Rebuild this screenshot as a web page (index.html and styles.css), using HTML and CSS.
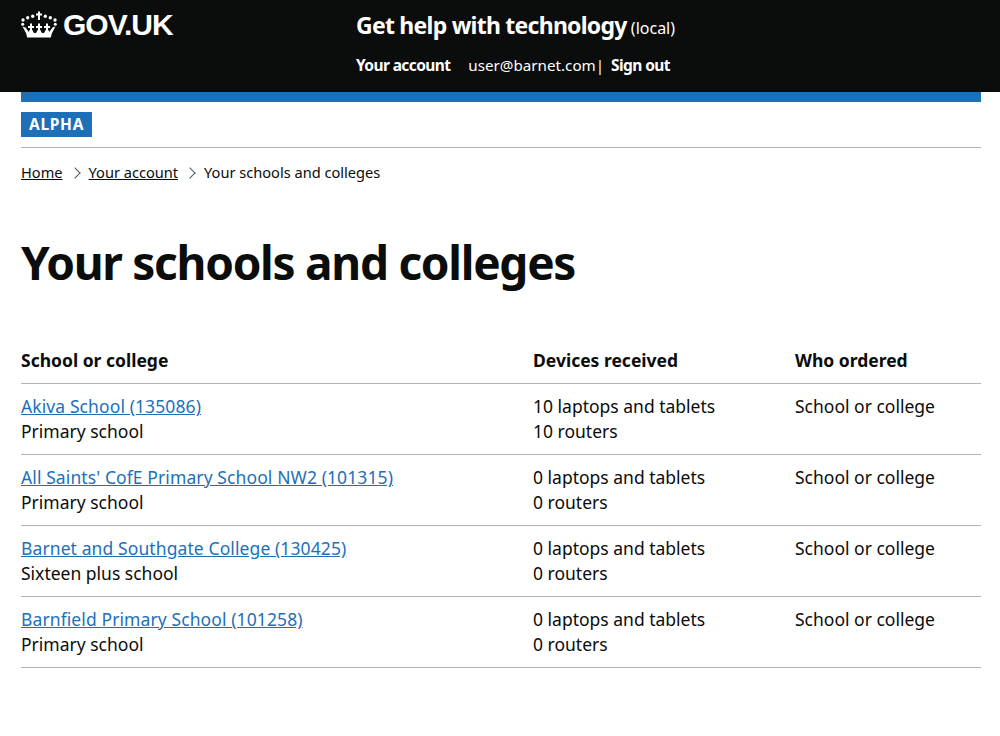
FILE: index.html
```html
<!DOCTYPE html>
<html lang="en">
<head>
  <meta charset="UTF-8">
  <title>Your schools and colleges - Get help with technology</title>
  <link rel="stylesheet" href="styles.css">
</head>
<body>
  <header class="header">
    <div class="header-logo">
      <svg class="crown" viewBox="0 0 36 27" width="36" height="27" fill="#fff">
        <path d="M17 .5h2v2h2v2h-2V9h-2V4.500h-2v-2h2z"/>
        <circle cx="11.700" cy="5.200" r="1.700"/><circle cx="24.300" cy="5.200" r="1.700"/>
        <circle cx="6.700" cy="6.700" r="1.700"/><circle cx="29.300" cy="6.700" r="1.700"/>
        <circle cx="2" cy="9" r="1.700"/><circle cx="34" cy="9" r="1.700"/>
        <circle cx="1.700" cy="13.300" r="1.500"/><circle cx="34.300" cy="13.300" r="1.500"/>
        <path d="M1.500 15.500L5 22h3.500L4.500 16.500z"/>
        <path d="M34.500 15.500L31 22h-3.500l4-5.500z"/>
        <path d="M9 12.500h2V15h2v2h-2v1.500l2 3.500H7l2-3.500V17H7v-2h2z"/>
        <path d="M17 12.500h2V15h2v2h-2v1.500l2 3.500h-6l2-3.500V17h-2v-2h2z"/>
        <path d="M25 12.500h2V15h2v2h-2v1.500l2 3.500h-6l2-3.500V17h-2v-2h2z"/>
        <path d="M5 22h26l-1.200 4.500H6.200z"/>
      </svg>
      <span class="logo-text">GOV.UK</span>
    </div>
    <div class="header-content">
      <div class="service-name">Get help with technology <span class="service-env">(local)</span></div>
      <nav class="header-nav">
        <a class="nav-link nav-account" href="#">Your account</a>
        <span class="nav-user">user@barnet.com |</span>
        <a class="nav-link" href="#">Sign out</a>
      </nav>
    </div>
  </header>
  <div class="page">
    <div class="blue-bar"></div>
    <div class="phase-banner"><strong class="tag">ALPHA</strong></div>
    <ol class="breadcrumbs">
      <li><a href="#">Home</a></li>
      <li class="crumb-next"><a href="#">Your account</a></li>
      <li class="crumb-next">Your schools and colleges</li>
    </ol>
    <h1 class="heading">Your schools and colleges</h1>
    <table class="table">
      <thead>
        <tr><th class="col-school">School or college</th><th class="col-devices">Devices received</th><th>Who ordered</th></tr>
      </thead>
      <tbody>
        <tr>
          <td><a href="#">Akiva School (135086)</a><br>Primary school</td>
          <td>10 laptops and tablets<br>10 routers</td>
          <td>School or college</td>
        </tr>
        <tr>
          <td><a href="#">All Saints' CofE Primary School NW2 (101315)</a><br>Primary school</td>
          <td>0 laptops and tablets<br>0 routers</td>
          <td>School or college</td>
        </tr>
        <tr>
          <td><a href="#">Barnet and Southgate College (130425)</a><br>Sixteen plus school</td>
          <td>0 laptops and tablets<br>0 routers</td>
          <td>School or college</td>
        </tr>
        <tr>
          <td><a href="#">Barnfield Primary School (101258)</a><br>Primary school</td>
          <td>0 laptops and tablets<br>0 routers</td>
          <td>School or college</td>
        </tr>
      </tbody>
    </table>
  </div>
</body>
</html>
```

FILE: styles.css
```css
* {
  box-sizing: border-box;
}

body {
  margin: 0;
  font-family: "Noto Sans", Arial, sans-serif;
  color: #0b0c0c;
  background: #fff;
  font-size: 19px;
  line-height: 25px;
}

.header {
  display: flex;
  height: 92px;
  padding: 0 21px;
  background: #0b0c0c;
  color: #fff;
}

.header-logo {
  display: flex;
  align-items: flex-start;
  gap: 6px;
  width: 335px;
  padding-top: 11px;
}

.logo-text {
  font-size: 30px;
  font-weight: 700;
  line-height: 28px;
  letter-spacing: -1px;
  font-family: "Liberation Sans", Arial, sans-serif;
}

.service-name {
  padding-top: 10px;
  font-size: 23px;
  font-weight: 700;
  line-height: 30px;
  letter-spacing: -0.75px;
}

.service-env {
  margin-left: -1px;
  font-size: 16px;
  font-weight: 400;
  letter-spacing: 0;
}

.header-nav {
  display: flex;
  margin-top: 7px;
  font-size: 15.2px;
  line-height: 30px;
}

.nav-link {
  color: #fff;
  font-size: 15.5px;
  font-weight: 700;
  text-decoration: none;
  letter-spacing: -0.6px;
}

.nav-account {
  margin-right: 18px;
}

.nav-user {
  margin-right: 7px;
  word-spacing: -4px;
}

.page {
  padding: 0 19px 0 21px;
}

.blue-bar {
  height: 10px;
  background: #1d70b8;
}

.phase-banner {
  display: flex;
  padding: 10px 0;
  border-bottom: 1px solid #b1b4b6;
}

.tag {
  padding: 3px 8px;
  background: #1d70b8;
  color: #fff;
  font-size: 15.5px;
  line-height: 19px;
  letter-spacing: 0.7px;
}

.breadcrumbs {
  display: flex;
  margin: 0;
  padding: 13px 0 0;
  list-style: none;
  font-size: 14.6px;
  line-height: 23px;
}

.breadcrumbs a {
  color: #0b0c0c;
}

.crumb-next {
  display: flex;
  align-items: center;
}

.crumb-next::before {
  content: "";
  width: 7px;
  height: 7px;
  margin: 0 10px 0 8px;
  border-top: 1px solid #505a5f;
  border-right: 1px solid #505a5f;
  transform: rotate(45deg);
}

.heading {
  margin: 53px 0 51px;
  font-size: 46px;
  line-height: 50px;
  font-weight: 700;
  letter-spacing: -1.28px;
}

.table {
  width: 100%;
  border-collapse: collapse;
  table-layout: fixed;
}

.table th,
.table td {
  padding: 10px 0;
  text-align: left;
  vertical-align: top;
  border-bottom: 1px solid #b1b4b6;
  font-size: 17.5px;
}

.table th {
  font-weight: 700;
}

.col-school {
  width: 512px;
}

.col-devices {
  width: 262px;
}

.table a {
  color: #1d70b8;
  letter-spacing: 0.1px;
}
```
